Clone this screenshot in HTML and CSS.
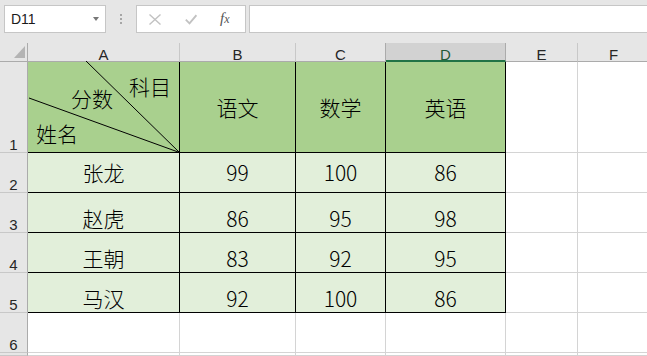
FILE: index.html
```html
<!DOCTYPE html>
<html lang="zh-CN">
<head>
<meta charset="utf-8">
<title>Sheet</title>
<link rel="stylesheet" href="styles.css">
</head>
<body>
<div class="toolbar">
  <div class="namebox"><span>D11</span><span class="caret"></span></div>
  <div class="grip"><i></i><i></i><i></i></div>
  <div class="fxbox">
    <svg class="ico" width="12" height="11" viewBox="0 0 12 11"><path d="M0.5 0.5 L11.5 10.5 M11.5 0.5 L0.5 10.5" stroke="#c2c2c2" stroke-width="1.4" fill="none"/></svg>
    <svg class="ico ico-check" width="12" height="11" viewBox="0 0 12 11"><path d="M0.8 5.6 L4.5 9.3 L11.4 1.2" stroke="#c2c2c2" stroke-width="1.8" fill="none"/></svg>
    <span class="fx">f<small>x</small></span>
  </div>
  <div class="formula"></div>
</div>
<div class="sheet">
  <div class="corner"><svg width="11" height="12" viewBox="0 0 11 12"><polygon points="11,0 11,12 0,12" fill="#b4b4b4"/></svg></div>
  <div class="colhdr">A</div>
  <div class="colhdr">B</div>
  <div class="colhdr presel">C</div>
  <div class="colhdr sel">D</div>
  <div class="colhdr">E</div>
  <div class="colhdr">F</div>

  <div class="rowhdr">1</div>
  <div class="c t h diag">
    <svg class="diag-lines" width="152" height="91" viewBox="0 0 152 91"><path d="M58 -1 L151.5 90.5 M1 36 L151.5 90.5" stroke="#000" stroke-width="1" fill="none"/></svg>
    <span class="lbl lbl-subj">科目</span>
    <span class="lbl lbl-score">分数</span>
    <span class="lbl lbl-name">姓名</span>
  </div>
  <div class="c t h">语文</div>
  <div class="c t h">数学</div>
  <div class="c t h">英语</div>
  <div class="c"></div>
  <div class="c"></div>

  <div class="rowhdr">2</div>
  <div class="c t d r2">张龙</div>
  <div class="c t d r2">99</div>
  <div class="c t d r2">100</div>
  <div class="c t d r2">86</div>
  <div class="c"></div>
  <div class="c"></div>

  <div class="rowhdr">3</div>
  <div class="c t d r3">赵虎</div>
  <div class="c t d r3">86</div>
  <div class="c t d r3">95</div>
  <div class="c t d r3">98</div>
  <div class="c"></div>
  <div class="c"></div>

  <div class="rowhdr">4</div>
  <div class="c t d r3">王朝</div>
  <div class="c t d r3">83</div>
  <div class="c t d r3">92</div>
  <div class="c t d r3">95</div>
  <div class="c"></div>
  <div class="c"></div>

  <div class="rowhdr">5</div>
  <div class="c t d r3">马汉</div>
  <div class="c t d r3">92</div>
  <div class="c t d r3">100</div>
  <div class="c t d r3">86</div>
  <div class="c"></div>
  <div class="c"></div>

  <div class="rowhdr">6</div>
  <div class="c"></div>
  <div class="c"></div>
  <div class="c"></div>
  <div class="c"></div>
  <div class="c"></div>
  <div class="c"></div>

  <div class="rowhdr"></div>
  <div class="c"></div>
  <div class="c"></div>
  <div class="c"></div>
  <div class="c"></div>
  <div class="c"></div>
  <div class="c"></div>
</div>
</body>
</html>
```

FILE: styles.css
```css
html, body {
  margin: 0;
  padding: 0;
  background: #fff;
  overflow: hidden;
}

body {
  font-family: "Liberation Sans", Arial, sans-serif;
  width: 647px;
  height: 356px;
}

/* ---------- toolbar ---------- */
.toolbar {
  display: flex;
  align-items: flex-start;
  height: 43px;
  box-sizing: border-box;
  padding: 5px 0 0 4px;
  background: #e6e6e6;
}

.namebox {
  display: flex;
  align-items: center;
  width: 102px;
  height: 28px;
  box-sizing: border-box;
  padding: 0 6px 0 6px;
  border: 1px solid #c6c6c6;
  background: #fff;
  font-size: 14px;
  color: #1a1a1a;
}

.caret {
  margin-left: auto;
  width: 0;
  height: 0;
  border-left: 3px solid transparent;
  border-right: 3px solid transparent;
  border-top: 4px solid #777;
}

.grip {
  display: flex;
  flex-direction: column;
  gap: 2px;
  margin: 9px 14px 0 14px;
}

.grip i {
  display: block;
  width: 2px;
  height: 2px;
  background: #a6a6a6;
}

.fxbox {
  display: flex;
  align-items: center;
  width: 110px;
  height: 28px;
  box-sizing: border-box;
  padding-left: 12px;
  border: 1px solid #c6c6c6;
  background: #fff;
}

.ico {
  display: block;
}

.ico-check {
  margin-left: 24px;
}

.fx {
  margin-left: 23px;
  font-family: "Liberation Serif", "Times New Roman", serif;
  font-style: italic;
  font-size: 15px;
  color: #555;
  line-height: 15px;
}

.fx small {
  font-size: 12px;
}

.formula {
  flex: 1;
  height: 28px;
  box-sizing: border-box;
  margin-left: 3px;
  margin-right: -4px;
  border: 1px solid #c6c6c6;
  background: #fff;
}

/* ---------- sheet ---------- */
.sheet {
  display: grid;
  height: 313px;
  overflow: hidden;
  grid-template-columns: 28px 152px 116px 90px 120px 72px 72px;
  grid-template-rows: 19px 91px repeat(5, 40px) 1fr;
}

.sheet > div {
  box-sizing: border-box;
}

.corner {
  display: flex;
  justify-content: flex-end;
  align-items: flex-end;
  padding: 0 2px 3px 0;
  background: #e6e6e6;
  border-right: 1px solid #ababab;
  border-bottom: 1px solid #ababab;
}

.corner svg {
  display: block;
}

.colhdr {
  display: flex;
  justify-content: center;
  align-items: flex-end;
  background: #e6e6e6;
  border-right: 1px solid #c8c8c8;
  border-bottom: 1px solid #ababab;
  font-size: 15px;
  line-height: 13px;
  color: #262626;
}

.colhdr.presel {
  border-right-color: #ababab;
}

.colhdr.sel {
  background: #d2d2d2;
  border-right-color: #ababab;
  border-bottom: 2px solid #217346;
  line-height: 11px;
  color: #1f5a37;
}

.rowhdr {
  display: flex;
  justify-content: center;
  align-items: flex-end;
  background: #e6e6e6;
  border-right: 1px solid #ababab;
  border-bottom: 1px solid #c8c8c8;
  font-size: 15px;
  line-height: 14px;
  color: #262626;
}

.c {
  display: flex;
  justify-content: center;
  align-items: flex-end;
  border-right: 1px solid #d4d4d4;
  border-bottom: 1px solid #d4d4d4;
  font-family: "Noto Sans CJK SC", "Noto Sans", sans-serif;
  font-weight: 300;
  font-size: 21px;
  line-height: 21px;
  color: #000;
}

.t {
  border-right-color: #000;
  border-bottom-color: #000;
}

.h {
  align-items: center;
  background: #a9d08e;
}

.d {
  background: #e2efda;
}

.r2 {
  padding-bottom: 9px;
}

.r3 {
  padding-bottom: 3px;
}

/* diagonal header cell */
.diag {
  position: relative;
}

.diag-lines {
  position: absolute;
  left: 0;
  top: 0;
  overflow: visible;
}

.lbl {
  position: absolute;
  line-height: 21px;
  white-space: nowrap;
}

.lbl-subj {
  left: 101px;
  top: 14px;
}

.lbl-score {
  left: 43px;
  top: 26px;
}

.lbl-name {
  left: 8px;
  top: 61px;
}
```
